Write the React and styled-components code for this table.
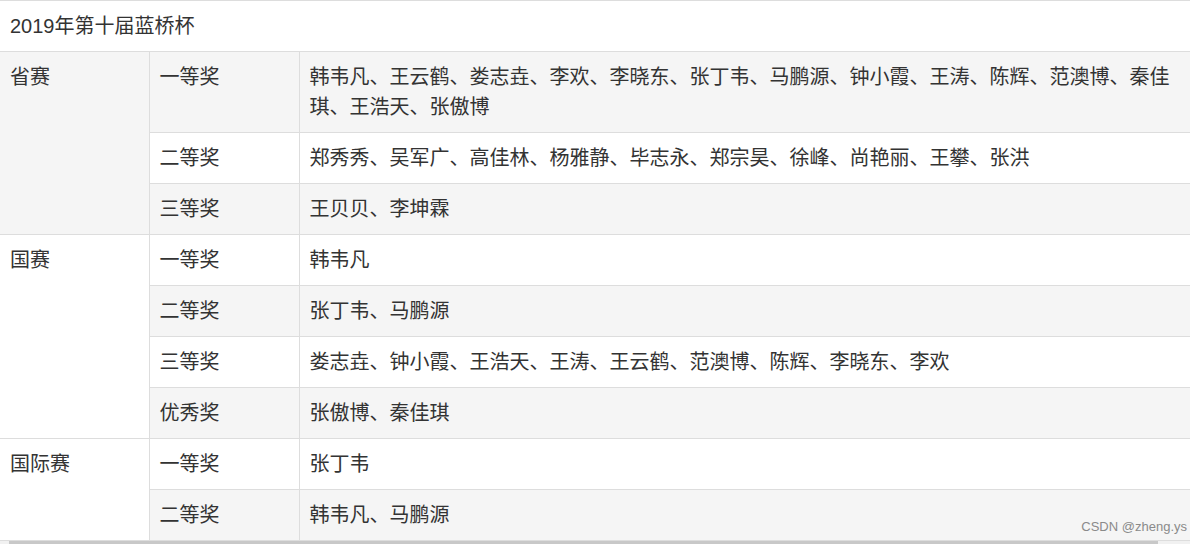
import React from "react";
import styled, { createGlobalStyle } from "styled-components";

const Global = createGlobalStyle`
  html, body { margin: 0; padding: 0; background: #fff; }
  body { font-family: "Liberation Sans", "Noto Sans CJK SC", sans-serif; color: #333; }
`;

const Page = styled.div`
  position: relative;
  width: 1202px;
  height: 544px;
  overflow: hidden;
`;

const Table = styled.table`
  width: 1190px;
  border-collapse: collapse;
  table-layout: fixed;
  font-size: 20px;
  line-height: 30px;
  color: #333;
`;

const TitleCell = styled.th`
  text-align: left;
  font-weight: normal;
  padding: 10px;
  border-top: 1px solid #ddd;
  border-bottom: 1px solid #ddd;
  background: #fff;
`;

const Row = styled.tr`
  background: ${(p) => (p.$striped ? "#f5f5f5" : "#fff")};
`;

const Cell = styled.td`
  padding: 10px;
  vertical-align: top;
  border-top: 1px solid #ddd;
  border-bottom: 1px solid #ddd;
  border-left: ${(p) => (p.$first ? "none" : "1px solid #ddd")};
  text-align: left;
`;

const ScrollTrack = styled.div`
  width: 1190px;
  height: 4px;
  background: #f1f1f1;
  display: flex;
  padding-left: 9px;
  box-sizing: border-box;
`;

const ScrollThumb = styled.div`
  width: 1149px;
  height: 4px;
  background: #c8c8c8;
`;

const Watermark = styled.div`
  position: absolute;
  right: 15px;
  top: 518px;
  font-family: "Liberation Sans", sans-serif;
  font-size: 13px;
  line-height: 18px;
  color: #8a8a8a;
`;

const groups = [
  {
    name: "省赛",
    rows: [
      ["一等奖", "韩韦凡、王云鹤、娄志垚、李欢、李晓东、张丁韦、马鹏源、钟小霞、王涛、陈辉、范澳博、秦佳琪、王浩天、张傲博"],
      ["二等奖", "郑秀秀、吴军广、高佳林、杨雅静、毕志永、郑宗昊、徐峰、尚艳丽、王攀、张洪"],
      ["三等奖", "王贝贝、李坤霖"],
    ],
  },
  {
    name: "国赛",
    rows: [
      ["一等奖", "韩韦凡"],
      ["二等奖", "张丁韦、马鹏源"],
      ["三等奖", "娄志垚、钟小霞、王浩天、王涛、王云鹤、范澳博、陈辉、李晓东、李欢"],
      ["优秀奖", "张傲博、秦佳琪"],
    ],
  },
  {
    name: "国际赛",
    rows: [
      ["一等奖", "张丁韦"],
      ["二等奖", "韩韦凡、马鹏源"],
    ],
  },
];

export default function App() {
  let idx = 0;
  return (
    <Page>
      <Global />
      <Table>
        <colgroup>
          <col style={{ width: "149px" }} />
          <col style={{ width: "150px" }} />
          <col />
        </colgroup>
        <thead>
          <tr>
            <TitleCell colSpan={3}>2019年第十届蓝桥杯</TitleCell>
          </tr>
        </thead>
        <tbody>
          {groups.map((g) =>
            g.rows.map((r, i) => {
              const striped = idx % 2 === 0;
              idx++;
              return (
                <Row key={g.name + i} $striped={striped}>
                  {i === 0 && (
                    <Cell $first rowSpan={g.rows.length}>
                      {g.name}
                    </Cell>
                  )}
                  <Cell>{r[0]}</Cell>
                  <Cell>{r[1]}</Cell>
                </Row>
              );
            })
          )}
        </tbody>
      </Table>
      <ScrollTrack>
        <ScrollThumb />
      </ScrollTrack>
      <Watermark>CSDN @zheng.ys</Watermark>
    </Page>
  );
}
